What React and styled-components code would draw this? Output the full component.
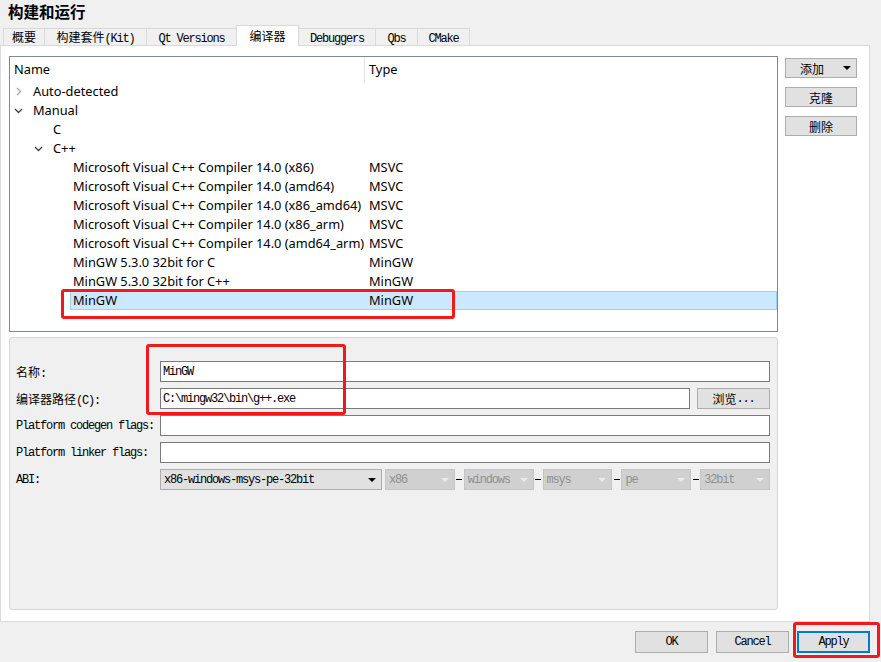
import React from 'react';
import styled, { createGlobalStyle } from 'styled-components';

const GlobalStyle = createGlobalStyle`
  html, body {
    margin: 0;
    padding: 0;
    background: #f0f0f0;
    overflow: hidden;
  }
  #root {
    width: 881px;
    height: 662px;
  }
`;

const UI_FONT = `"Noto Sans", "Noto Sans CJK SC", sans-serif`;

// Song-style text: narrow mono latin, full-width CJK
const SongText = styled.span`
  font-family: "Liberation Mono", monospace;
  font-size: 12px;
  letter-spacing: -1.2px;
  color: ${(p) => p.$color || '#000'};
  white-space: pre;
`;

const Cjk = styled.span`
  font-family: "Noto Sans CJK SC", sans-serif;
  font-size: 12px;
  letter-spacing: 0;
`;

const Song = ({ children, color }) => {
  const parts = String(children).split(/([\u3000-\u9fff\uff00-\uffef]+)/);
  return (
    <SongText $color={color}>
      {parts.map((p, i) => (i % 2 ? <Cjk key={i}>{p}</Cjk> : p))}
    </SongText>
  );
};

const Window = styled.div`
  position: relative;
  width: 881px;
  height: 662px;
  display: flex;
  flex-direction: column;
  background: #f0f0f0;
`;

const Title = styled.h1`
  margin: 0;
  height: 25px;
  box-sizing: border-box;
  padding: 1px 0 0 8px;
  font: bold 15.5px/20px "Noto Sans CJK SC", sans-serif;
  color: #000;
`;

const TabBar = styled.div`
  display: flex;
  align-items: flex-end;
  height: 20px;
  padding-left: 3px;
  position: relative;
  z-index: 1;
`;

const Tab = styled.div`
  box-sizing: border-box;
  width: ${(p) => p.$w}px;
  height: ${(p) => (p.$active ? 21 : 17)}px;
  margin-bottom: ${(p) => (p.$active ? -1 : 0)}px;
  margin-left: -1px;
  padding-top: ${(p) => (p.$active ? 2 : 0)}px;
  border: 1px solid #d9d9d9;
  border-bottom: none;
  background: ${(p) => (p.$active ? '#fff' : '#f0f0f0')};
  line-height: 15px;
  text-align: center;
  position: relative;
  z-index: ${(p) => (p.$active ? 1 : 0)};
  &:first-child {
    margin-left: 0;
  }
`;

const Pane = styled.div`
  box-sizing: border-box;
  height: 577px;
  width: 870px;
  border: 1px solid #dadada;
  background: #fff;
  padding: 10px 11px 11px 8px;
  display: grid;
  grid-template-columns: 769px 72px;
  grid-template-rows: 276px 1fr;
  column-gap: 7px;
  row-gap: 5px;
`;

const Tree = styled.div`
  box-sizing: border-box;
  border: 1px solid #828790;
  background: #fff;
  display: flex;
  flex-direction: column;
  overflow: hidden;
  font-family: ${UI_FONT};
  font-size: 12.8px;
  color: #000;
`;

const TreeHeader = styled.div`
  display: grid;
  grid-template-columns: 355px 1fr;
  height: 25px;
  line-height: 25px;
`;

const HeaderCell = styled.div`
  padding-left: 4px;
  border-right: ${(p) => (p.$divider ? '1px solid #e5e5e5' : 'none')};
`;

const Row = styled.div`
  display: flex;
  height: 19px;
  line-height: 17px;
`;

const Lead = styled.div`
  flex: none;
  display: flex;
  align-items: center;
  box-sizing: border-box;
`;

const ArrowBox = styled.span`
  width: 16px;
  display: flex;
  align-items: center;
  color: ${(p) => (p.$open ? '#404040' : '#a6a6a6')};
`;

const RowBody = styled.div`
  flex: 1;
  display: flex;
  box-sizing: border-box;
  padding-left: 2px;
  border: 1px solid ${(p) => (p.$selected ? '#99d1ff' : 'transparent')};
  background: ${(p) => (p.$selected ? '#cce8ff' : 'transparent')};
`;

const NameCell = styled.div`
  flex: none;
  white-space: nowrap;
`;

const TypeCell = styled.div`
  padding-left: 4px;
`;

const SideButtons = styled.div`
  display: flex;
  flex-direction: column;
  gap: 9px;
  padding-top: 2px;
`;

const Button = styled.button`
  box-sizing: border-box;
  width: ${(p) => p.$w || 72}px;
  height: ${(p) => p.$h || 20}px;
  margin: 0;
  padding: 0;
  border: ${(p) => (p.$default ? '2px solid #0078d7' : '1px solid #adadad')};
  background: #e1e1e1;
  color: #000;
  font-family: "Noto Sans CJK SC", sans-serif;
  font-size: 12px;
  display: flex;
  align-items: center;
  justify-content: center;
  position: relative;
`;

const DropArrow = styled.span`
  position: absolute;
  right: 5px;
  top: 7px;
  width: 0;
  height: 0;
  border-left: 4px solid transparent;
  border-right: 4px solid transparent;
  border-top: 4px solid #000;
`;

const Details = styled.div`
  box-sizing: border-box;
  border: 1px solid #d5d5d5;
  border-radius: 3px;
  background: #f0f0f0;
  padding: 23px 7px 0 6px;
  display: grid;
  grid-template-columns: 144px 1fr;
  grid-auto-rows: 21px;
  row-gap: 6px;
  align-content: start;
`;

const Label = styled.div`
  display: flex;
  align-items: center;
`;

const Field = styled.div`
  display: flex;
  align-items: center;
  gap: ${(p) => p.$gap || 0}px;
`;

const Input = styled.div`
  flex: 1;
  box-sizing: border-box;
  height: 21px;
  border: 1px solid #7a7a7a;
  background: #fff;
  padding-left: 2px;
  display: flex;
  align-items: center;
`;

const Combo = styled.div`
  box-sizing: border-box;
  flex: ${(p) => (p.$w ? 'none' : 1)};
  width: ${(p) => (p.$w ? `${p.$w}px` : 'auto')};
  height: 21px;
  border: 1px solid ${(p) => (p.$disabled ? '#c4c4c4' : '#adadad')};
  background: ${(p) => (p.$disabled ? '#d0d0d0' : '#e1e1e1')};
  padding-left: 3px;
  display: flex;
  align-items: center;
  justify-content: space-between;
  margin-right: ${(p) => p.$mr || 0}px;
`;

const ComboArrow = styled.span`
  margin-right: 5px;
  width: 0;
  height: 0;
  border-left: 4px solid transparent;
  border-right: 4px solid transparent;
  border-top: 4px solid ${(p) => (p.$disabled ? '#ececec' : '#000')};
`;

const Dash = styled.span`
  flex: none;
  width: 9px;
  display: flex;
  justify-content: center;
  &::before {
    content: '';
    width: 6px;
    height: 1px;
    background: #000;
  }
`;

const Footer = styled.div`
  flex: 1;
  display: flex;
  justify-content: flex-end;
  align-items: flex-start;
  gap: 8px;
  padding: 9px 11px 0 0;
`;

const Mark = styled.div`
  position: absolute;
  left: ${(p) => p.$x}px;
  top: ${(p) => p.$y}px;
  width: ${(p) => p.$w}px;
  height: ${(p) => p.$h}px;
  box-sizing: border-box;
  border: 3px solid #f01a1a;
  border-radius: 3px;
  pointer-events: none;
`;

const Chevron = ({ open }) => (
  <svg width="9" height="9" viewBox="0 0 9 9" fill="none" stroke="currentColor" strokeWidth="1.3">
    {open ? <path d="M1 3 L4.5 6.5 L8 3" /> : <path d="M3 1 L6.5 4.5 L3 8" />}
  </svg>
);

const tabs = [
  { label: '概要', w: 42 },
  { label: '构建套件(Kit)', w: 103 },
  { label: 'Qt Versions', w: 91 },
  { label: '编译器', w: 63, active: true },
  { label: 'Debuggers', w: 78 },
  { label: 'Qbs', w: 43 },
  { label: 'CMake', w: 53 },
];

const rows = [
  { name: 'Auto-detected', depth: 0, arrow: 'closed' },
  { name: 'Manual', depth: 0, arrow: 'open' },
  { name: 'C', depth: 1 },
  { name: 'C++', depth: 1, arrow: 'open' },
  { name: 'Microsoft Visual C++ Compiler 14.0 (x86)', depth: 2, type: 'MSVC' },
  { name: 'Microsoft Visual C++ Compiler 14.0 (amd64)', depth: 2, type: 'MSVC' },
  { name: 'Microsoft Visual C++ Compiler 14.0 (x86_amd64)', depth: 2, type: 'MSVC' },
  { name: 'Microsoft Visual C++ Compiler 14.0 (x86_arm)', depth: 2, type: 'MSVC' },
  { name: 'Microsoft Visual C++ Compiler 14.0 (amd64_arm)', depth: 2, type: 'MSVC' },
  { name: 'MinGW 5.3.0 32bit for C', depth: 2, type: 'MinGW' },
  { name: 'MinGW 5.3.0 32bit for C++', depth: 2, type: 'MinGW' },
  { name: 'MinGW', depth: 2, type: 'MinGW', selected: true },
];

const abiParts = ['x86', 'windows', 'msys', 'pe', '32bit'];

const TreeRow = ({ row }) => {
  const lead = 4 + row.depth * 20 + 16;
  return (
    <Row>
      <Lead style={{ width: lead, paddingLeft: 4 + row.depth * 20 }}>
        {row.arrow && (
          <ArrowBox $open={row.arrow === 'open'}>
            <Chevron open={row.arrow === 'open'} />
          </ArrowBox>
        )}
      </Lead>
      <RowBody $selected={row.selected}>
        <NameCell style={{ width: 355 - lead - 3 }}>{row.name}</NameCell>
        <TypeCell>{row.type}</TypeCell>
      </RowBody>
    </Row>
  );
};

export default function App() {
  return (
    <Window>
      <GlobalStyle />
      <Title>构建和运行</Title>
      <TabBar>
        {tabs.map((t) => (
          <Tab key={t.label} $w={t.w} $active={t.active}>
            <Song>{t.label}</Song>
          </Tab>
        ))}
      </TabBar>
      <Pane>
        <Tree>
          <TreeHeader>
            <HeaderCell $divider>Name</HeaderCell>
            <HeaderCell>Type</HeaderCell>
          </TreeHeader>
          {rows.map((r) => (
            <TreeRow key={r.name} row={r} />
          ))}
        </Tree>
        <SideButtons>
          <Button>
            <span style={{ marginRight: 18 }}>添加</span>
            <DropArrow />
          </Button>
          <Button>克隆</Button>
          <Button>删除</Button>
        </SideButtons>
        <Details>
          <Label><Song>名称:</Song></Label>
          <Field>
            <Input><Song>MinGW</Song></Input>
          </Field>
          <Label><Song>编译器路径(C):</Song></Label>
          <Field $gap={7}>
            <Input><Song>{'C:\\mingw32\\bin\\g++.exe'}</Song></Input>
            <Button $w={73} $h={21}>浏览<Song>...</Song></Button>
          </Field>
          <Label><Song>Platform codegen flags:</Song></Label>
          <Field>
            <Input />
          </Field>
          <Label><Song>Platform linker flags:</Song></Label>
          <Field>
            <Input />
          </Field>
          <Label><Song>ABI:</Song></Label>
          <Field>
            <Combo $w={222} $mr={3}>
              <Song>x86-windows-msys-pe-32bit</Song>
              <ComboArrow />
            </Combo>
            {abiParts.map((p, i) => (
              <React.Fragment key={p}>
                {i > 0 && <Dash />}
                <Combo $disabled>
                  <Song color="#8f8f8f">{p}</Song>
                  <ComboArrow $disabled />
                </Combo>
              </React.Fragment>
            ))}
          </Field>
        </Details>
      </Pane>
      <Footer>
        <Button $w={73} $h={22}><Song>OK</Song></Button>
        <Button $w={73} $h={22}><Song>Cancel</Song></Button>
        <Button $w={73} $h={22} $default><Song>Apply</Song></Button>
      </Footer>
      <Mark $x={61} $y={289} $w={394} $h={30} />
      <Mark $x={146} $y={344} $w={200} $h={71} />
      <Mark $x={793} $y={622} $w={87} $h={36} />
    </Window>
  );
}
